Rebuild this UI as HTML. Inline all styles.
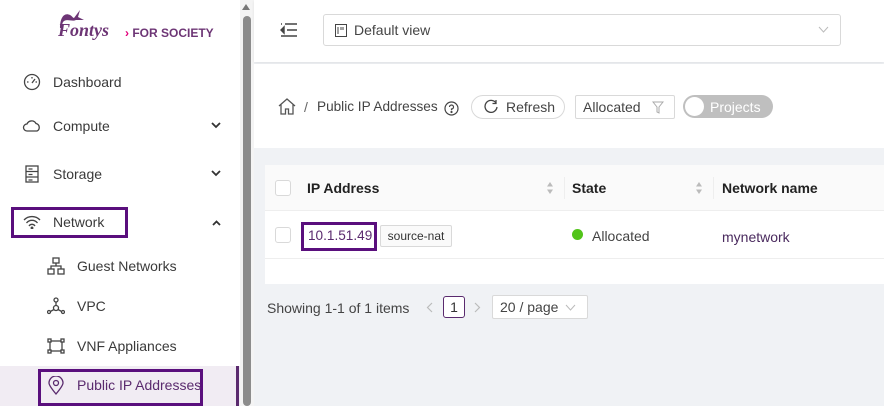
<!DOCTYPE html>
<html><head><meta charset="utf-8"><style>
*{box-sizing:border-box;margin:0;padding:0}
body{width:884px;height:406px;overflow:hidden;font-family:"Liberation Sans",sans-serif;background:#fff;position:relative;color:#333}
.abs{position:absolute}
.side{left:0;top:0;width:240px;height:406px;background:#fff}
.item{position:absolute;font-size:14px;color:#3a3a3a;display:flex;align-items:center}
.sb{left:240px;top:0;width:14px;height:406px;background:#f4f4f4}
.thumb{left:243px;top:16px;width:8px;height:390px;background:#8c8c8c;border-radius:4px}
.main{left:254px;top:0;width:630px;height:406px;background:#f0f2f5}
</style></head><body>
<div class="abs side">
  <svg class="abs" style="left:56px;top:6px" width="30" height="24" viewBox="0 0 30 24"><path d="M4 22 C4 12 8 6 14 9 C16 10 17 12 18 12 L24 4 L22 11 L28 14 L20 14 C16 16 10 12 7 16 C6 18 6 20 6 22Z" fill="#6d3575"/></svg>
  <div class="abs" style="left:58px;top:20px;font-family:'Liberation Serif',serif;font-size:18px;color:#6d3575;font-weight:bold;font-style:italic">Fontys</div>
  <div class="abs" style="left:125px;top:26px;font-size:12px;font-weight:bold;color:#6d3575"><span style="color:#e2007a">›</span> FOR SOCIETY</div>

  <div class="item" style="left:53px;top:74px">Dashboard</div>
  <svg class="abs" style="left:23px;top:73px" width="18" height="18" viewBox="0 0 18 18" fill="none" stroke="#444" stroke-width="1.3"><circle cx="9" cy="9" r="7.5"/><path d="M9 10 L12 6 M4 9h1.5 M12.5 9H14 M9 4v1.5"/></svg>
  <div class="item" style="left:53px;top:118px">Compute</div>
  <svg class="abs" style="left:22px;top:119px" width="20" height="14" viewBox="0 0 20 14" fill="none" stroke="#444" stroke-width="1.3"><path d="M5 12 H15 A4 4 0 0 0 14 4.5 A5 5 0 0 0 5 5 A3.5 3.5 0 0 0 5 12Z"/></svg>
  <svg class="abs" style="left:211px;top:122px" width="10" height="7" viewBox="0 0 10 7" fill="none" stroke="#333" stroke-width="1.8"><path d="M1 1l4 4 4-4"/></svg>
  <div class="item" style="left:53px;top:166px">Storage</div>
  <svg class="abs" style="left:25px;top:165px" width="14" height="18" viewBox="0 0 14 18" fill="none" stroke="#444" stroke-width="1.3"><rect x="1" y="1" width="12" height="16"/><path d="M1 6.5h12M1 12h12M3.5 4h4M3.5 9.5h4M3.5 15h4"/></svg>
  <svg class="abs" style="left:211px;top:170px" width="10" height="7" viewBox="0 0 10 7" fill="none" stroke="#333" stroke-width="1.8"><path d="M1 1l4 4 4-4"/></svg>

  <div class="abs" style="left:11px;top:207px;width:117px;height:31px;border:3px solid #5a0f7d"></div>
  <div class="item" style="left:53px;top:214px">Network</div>
  <svg class="abs" style="left:23px;top:215px" width="18" height="14" viewBox="0 0 18 14" fill="none" stroke="#444" stroke-width="1.3"><path d="M1 5 A11 11 0 0 1 17 5 M3.5 8 A7 7 0 0 1 14.5 8 M6 11 A3.5 3.5 0 0 1 12 11"/><circle cx="9" cy="13" r=".8" fill="#444"/></svg>
  <svg class="abs" style="left:212px;top:220px" width="9" height="6" viewBox="0 0 9 6" fill="none" stroke="#333" stroke-width="1.8"><path d="M1 5l3.5-3.5L8 5"/></svg>

  <div class="item" style="left:77px;top:258px">Guest Networks</div>
  <svg class="abs" style="left:47px;top:257px" width="18" height="18" viewBox="0 0 18 18" fill="none" stroke="#444" stroke-width="1.3"><rect x="6" y="1" width="6" height="5"/><rect x="1" y="12" width="6" height="5"/><rect x="11" y="12" width="6" height="5"/><path d="M9 6v3M4 12V9h10v3"/></svg>
  <div class="item" style="left:77px;top:298px">VPC</div>
  <svg class="abs" style="left:47px;top:297px" width="18" height="18" viewBox="0 0 18 18" fill="none" stroke="#444" stroke-width="1.3"><circle cx="9" cy="3" r="2"/><circle cx="9" cy="11" r="2.5"/><circle cx="2" cy="15" r="1.5"/><circle cx="16" cy="15" r="1.5"/><path d="M9 5v3.5M7 12.5 3.3 14.5M11 12.5l3.7 2"/></svg>
  <div class="item" style="left:77px;top:338px">VNF Appliances</div>
  <svg class="abs" style="left:47px;top:338px" width="18" height="16" viewBox="0 0 18 16" fill="none" stroke="#444" stroke-width="1.3"><rect x="3" y="3" width="12" height="10"/><rect x="1" y="1" width="3" height="3" fill="#fff"/><rect x="14" y="1" width="3" height="3" fill="#fff"/><rect x="1" y="12" width="3" height="3" fill="#fff"/><rect x="14" y="12" width="3" height="3" fill="#fff"/></svg>

  <div class="abs" style="left:0;top:366px;width:240px;height:40px;background:#f1ecf3"></div>
  <div class="abs" style="left:236px;top:366px;width:3px;height:40px;background:#5a2a6e"></div>
  <div class="abs" style="left:38px;top:369px;width:165px;height:37px;border:3px solid #5a0f7d"></div>
  <div class="item" style="left:77px;top:377px;color:#5a2a6e">Public IP Addresses</div>
  <svg class="abs" style="left:48px;top:376px" width="16" height="19" viewBox="0 0 16 19" fill="none" stroke="#5a2a6e" stroke-width="1.3"><path d="M8 18 C3 12 1 9 1 7 A7 7 0 0 1 15 7 C15 9 13 12 8 18Z"/><circle cx="8" cy="7" r="2.5"/></svg>
</div>
<div class="abs sb"></div>
<div class="abs" style="left:242px;top:4px;width:0;height:0;border-left:4px solid transparent;border-right:4px solid transparent;border-bottom:6px solid #777"></div>
<div class="abs thumb"></div>

<div class="abs main">
  <div class="abs" style="left:0;top:0;width:630px;height:62px;background:#fff;box-shadow:0 1px 3px rgba(0,0,0,.08)"></div>
  <svg class="abs" style="left:26px;top:22px" width="18" height="16" viewBox="0 0 18 16" stroke="#444" stroke-width="1.4"><path d="M5 2h12M7 8h10M1 14h16M1 2h1"/><path d="M4 5 1 8 4 11Z" fill="#444"/></svg>
  <div class="abs" style="left:69px;top:14px;width:518px;height:32px;border:1px solid #d9d9d9;border-radius:3px;background:#fff"></div>
  <svg class="abs" style="left:81px;top:24px" width="12" height="13" viewBox="0 0 12 13" fill="none" stroke="#444" stroke-width="1"><rect x=".5" y=".5" width="11" height="12"/><path d="M3 3v7M6 3v3M8 3v3"/></svg>
  <div class="abs" style="left:100px;top:22px;font-size:14px;color:#444">Default view</div>
  <svg class="abs" style="left:564px;top:26px" width="11" height="7" viewBox="0 0 11 7" fill="none" stroke="#bbb" stroke-width="1"><path d="M1 1l4.5 5L10 1"/></svg>

  <div class="abs" style="left:0;top:64px;width:630px;height:84px;background:#fff"></div>
  <svg class="abs" style="left:24px;top:98px" width="18" height="17" viewBox="0 0 18 17" fill="none" stroke="#555" stroke-width="1.3"><path d="M1 8 9 1l8 7M3 6.5V16h4.5v-5h3v5H15V6.5"/></svg>
  <div class="abs" style="left:50px;top:99px;font-size:14px;color:#666">/</div>
  <div class="abs" style="left:63px;top:99px;font-size:13.6px;color:#444">Public IP Addresses</div>
  <svg class="abs" style="left:190px;top:101px" width="15" height="15" viewBox="0 0 15 15" fill="none" stroke="#444" stroke-width="1.2"><circle cx="7.5" cy="7.5" r="6.5"/><path d="M5.5 6 A2 2 0 1 1 7.5 8v1.2"/><circle cx="7.5" cy="11" r=".5" fill="#444"/></svg>
  <div class="abs" style="left:217px;top:95px;width:94px;height:24px;border:1px solid #d9d9d9;border-radius:12px;background:#fff"></div>
  <svg class="abs" style="left:230px;top:99px" width="14" height="14" viewBox="0 0 14 14" fill="none" stroke="#444" stroke-width="1.3"><path d="M12 4 A6 6 0 1 0 13 8"/><path d="M12 1v3.5H8.5"/></svg>
  <div class="abs" style="left:252px;top:99px;font-size:14px;color:#444">Refresh</div>
  <div class="abs" style="left:321px;top:95px;width:100px;height:24px;border:1px solid #d9d9d9;border-radius:2px;background:#fff"></div>
  <div class="abs" style="left:329px;top:99px;font-size:14px;color:#444">Allocated</div>
  <svg class="abs" style="left:398px;top:101px" width="12" height="13" viewBox="0 0 12 13" fill="none" stroke="#aaa" stroke-width="1"><path d="M1 1h10L7 6v6L5 11V6Z"/></svg>
  <div class="abs" style="left:429px;top:95px;width:90px;height:23px;border-radius:12px;background:#bfbfbf"></div>
  <div class="abs" style="left:431px;top:97px;width:19px;height:19px;border-radius:50%;background:#fff"></div>
  <div class="abs" style="left:456px;top:99px;font-size:14px;color:#fff">Projects</div>

  <div class="abs" style="left:11px;top:165px;width:619px;height:119px;background:#fff"></div>
  <div class="abs" style="left:11px;top:165px;width:619px;height:46px;background:#fafafa;border-bottom:1px solid #eee"></div>
  <div class="abs" style="left:11px;top:211px;width:619px;height:48px;border-bottom:1px solid #eee"></div>
  <div class="abs" style="left:21px;top:180px;width:16px;height:16px;border:1px solid #d9d9d9;border-radius:3px;background:#fff"></div>
  <div class="abs" style="left:21px;top:227px;width:16px;height:16px;border:1px solid #d9d9d9;border-radius:3px;background:#fff"></div>
  <div class="abs" style="left:53px;top:180px;font-size:14px;font-weight:bold;color:#222">IP Address</div>
  <svg class="abs" style="left:292px;top:181px" width="8" height="14" viewBox="0 0 8 14" fill="#bbb"><path d="M4 1 7 5.5H1Z M4 13 7 8.5H1Z"/></svg>
  <div class="abs" style="left:310px;top:177px;width:1px;height:22px;background:#eee"></div>
  <div class="abs" style="left:318px;top:180px;font-size:14px;font-weight:bold;color:#222">State</div>
  <svg class="abs" style="left:441px;top:181px" width="8" height="14" viewBox="0 0 8 14" fill="#bbb"><path d="M4 1 7 5.5H1Z M4 13 7 8.5H1Z"/></svg>
  <div class="abs" style="left:459px;top:177px;width:1px;height:22px;background:#eee"></div>
  <div class="abs" style="left:468px;top:180px;font-size:14px;font-weight:bold;color:#222">Network name</div>

  <div class="abs" style="left:47px;top:222px;width:76px;height:29px;border:3px solid #5a0f7d"></div>
  <div class="abs" style="left:54px;top:228px;font-size:13.6px;color:#5a2a6e">10.1.51.49</div>
  <div class="abs" style="left:126px;top:225px;width:72px;height:22px;border:1px solid #d9d9d9;border-radius:2px;background:#fafafa;font-size:12px;color:#333;text-align:center;line-height:20px">source-nat</div>
  <div class="abs" style="left:318px;top:229px;width:11px;height:11px;border-radius:50%;background:#52c41a"></div>
  <div class="abs" style="left:338px;top:228px;font-size:14px;color:#444">Allocated</div>
  <div class="abs" style="left:468px;top:229px;font-size:14px;color:#4a2a5e">mynetwork</div>

  <div class="abs" style="left:13px;top:300px;font-size:14px;color:#444">Showing 1-1 of 1 items</div>
  <svg class="abs" style="left:172px;top:302px" width="7" height="11" viewBox="0 0 7 11" fill="none" stroke="#bbb" stroke-width="1.2"><path d="M6 1 1.5 5.5 6 10"/></svg>
  <div class="abs" style="left:189px;top:296px;width:22px;height:22px;border:1px solid #5a2a6e;border-radius:3px;background:#fff;font-size:14px;text-align:center;line-height:20px;color:#333">1</div>
  <svg class="abs" style="left:220px;top:302px" width="7" height="11" viewBox="0 0 7 11" fill="none" stroke="#bbb" stroke-width="1.2"><path d="M1 1l4.5 4.5L1 10"/></svg>
  <div class="abs" style="left:238px;top:295px;width:96px;height:24px;border:1px solid #d9d9d9;border-radius:2px;background:#fff"></div>
  <div class="abs" style="left:246px;top:299px;font-size:14px;color:#444">20 / page</div>
  <svg class="abs" style="left:311px;top:304px" width="11" height="7" viewBox="0 0 11 7" fill="none" stroke="#bbb" stroke-width="1"><path d="M1 1l4.5 5L10 1"/></svg>
</div>
</body></html>
